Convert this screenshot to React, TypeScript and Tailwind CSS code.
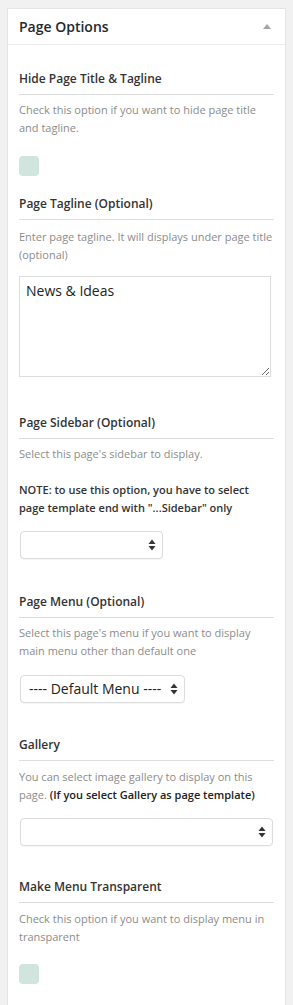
import React from "react";

const FONT = { fontFamily: '"Open Sans", "Liberation Sans", sans-serif' };

function SelectArrows() {
  return (
    <svg width="8" height="12" viewBox="0 0 8 12" className="shrink-0">
      <path d="M4 0.5 L7.5 5 L0.5 5 Z" fill="#333" />
      <path d="M4 11.5 L7.5 7 L0.5 7 Z" fill="#333" />
    </svg>
  );
}

function FakeSelect({ width, label }: { width: string; label?: string }) {
  return (
    <div
      className={`${width} h-[28px] ml-px flex items-center justify-between pl-[8px] pr-[6px] border border-[#dcdcdc] rounded-[4px] bg-white shadow-[0_1px_1px_rgba(0,0,0,0.04)]`}
    >
      <span className="text-[14px] text-[#222] leading-none">{label ?? ""}</span>
      <SelectArrows />
    </div>
  );
}

function Label({ children, className = "" }: { children: React.ReactNode; className?: string }) {
  return (
    <div className={`text-[12px] font-semibold text-[#333] leading-[20px] pb-[5px] border-b border-[#dedede] ${className}`}>
      {children}
    </div>
  );
}

function Desc({ children, className = "" }: { children: React.ReactNode; className?: string }) {
  return <p className={`text-[11px] text-[#8c8c8c] leading-[18px] ${className}`}>{children}</p>;
}

function Check({ className = "" }: { className?: string }) {
  return <div className={`w-[20px] h-[20px] rounded-[4px] bg-[#d1e5df] ${className}`} />;
}

export default function App() {
  return (
    <div className="min-h-[1005px] bg-[#f1f1f1] pt-[8px] pl-[7px] pr-[7px]" style={FONT}>
      <div className="bg-white border border-[#e5e5e5] border-b-0 min-h-[997px]">
        {/* ── Header ─────────────────────────────── */}
        <div className="h-[36px] flex items-center justify-between pl-[11px] pr-[14px] border-b border-[#eeeeee]">
          <h2 className="text-[14px] font-semibold text-[#23282d]">Page Options</h2>
          <svg width="8" height="5" viewBox="0 0 8 5">
            <path d="M4 0 L8 5 L0 5 Z" fill="#a0a5aa" />
          </svg>
        </div>

        <div className="px-[11px] pb-[20px]">
          {/* Hide title */}
          <Label className="mt-[24px]">Hide Page Title &amp; Tagline</Label>
          <Desc className="mt-[6px]">Check this option if you want to hide page title and tagline.</Desc>
          <Check className="mt-[19px]" />

          {/* Tagline */}
          <Label className="mt-[18px]">Page Tagline (Optional)</Label>
          <Desc className="mt-[8px]">Enter page tagline. It will displays under page title (optional)</Desc>
          <textarea
            className="mt-[12px] block w-[252px] h-[101px] border border-[#dddddd] px-[6px] py-[2px] text-[14px] text-[#222] leading-[24px] outline-none"
            defaultValue="News & Ideas"
          />

          {/* Sidebar */}
          <Label className="mt-[36px]">Page Sidebar (Optional)</Label>
          <Desc className="mt-[6px]">Select this page's sidebar to display.</Desc>
          <p className="mt-[18px] text-[11px] font-semibold text-[#333] leading-[18px]">
            NOTE: to use this option, you have to select page template end with "...Sidebar" only
          </p>
          <div className="mt-[14px]">
            <FakeSelect width="w-[143px]" />
          </div>

          {/* Menu */}
          <Label className="mt-[33px]">Page Menu (Optional)</Label>
          <Desc className="mt-[6px]">Select this page's menu if you want to display main menu other than default one</Desc>
          <div className="mt-[15px]">
            <FakeSelect width="w-[165px]" label="---- Default Menu ----" />
          </div>

          {/* Gallery */}
          <Label className="mt-[32px]">Gallery</Label>
          <Desc className="mt-[7px]">
            You can select image gallery to display on this page.{" "}
            <span className="font-semibold text-[#222]">(If you select Gallery as page template)</span>
          </Desc>
          <div className="mt-[14px]">
            <FakeSelect width="w-[253px]" />
          </div>

          {/* Transparent menu */}
          <Label className="mt-[31px]">Make Menu Transparent</Label>
          <Desc className="mt-[7px]">Check this option if you want to display menu in transparent</Desc>
          <Check className="mt-[18px]" />
        </div>
      </div>
    </div>
  );
}
